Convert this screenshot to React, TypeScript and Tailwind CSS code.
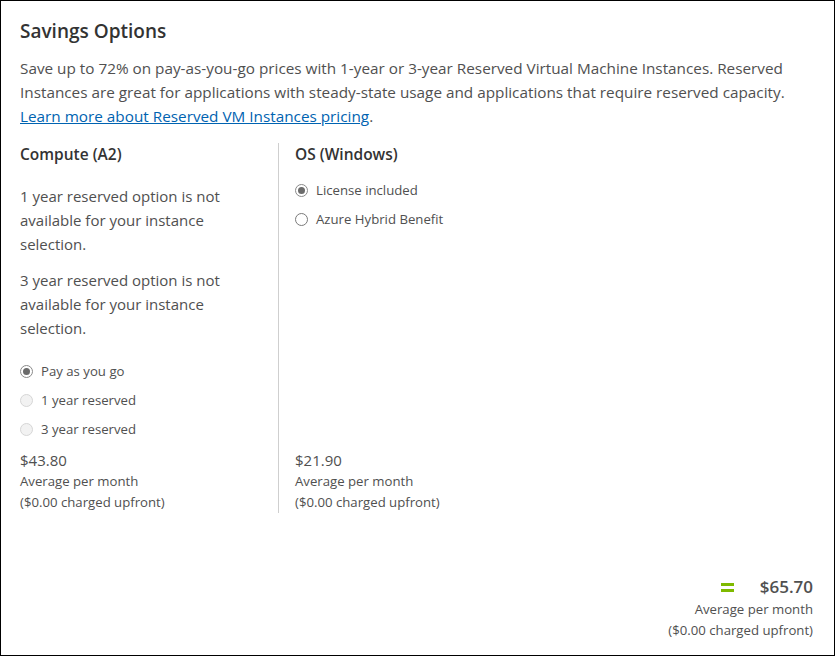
import React from "react";

const font = { fontFamily: '"Open Sans", "Noto Sans", sans-serif' };

function Radio({ state }: { state: "checked" | "unchecked" | "disabled" }) {
  if (state === "checked")
    return (
      <span className="flex h-[13px] w-[13px] items-center justify-center rounded-full border border-[#8a8a8a] bg-white">
        <span className="h-[7px] w-[7px] rounded-full bg-[#6b6b6b]" />
      </span>
    );
  if (state === "disabled")
    return <span className="h-[13px] w-[13px] rounded-full border border-[#d6d6d6] bg-[#f2f2f2]" />;
  return <span className="h-[13px] w-[13px] rounded-full border border-[#7a7a7a] bg-white" />;
}

function RadioRow({ state, label }: { state: "checked" | "unchecked" | "disabled"; label: string }) {
  return (
    <div className="flex h-[29px] items-center gap-2">
      <Radio state={state} />
      <span className="text-[13.2px] text-[#505050]">{label}</span>
    </div>
  );
}

export default function App() {
  return (
    <div style={font} className="box-border h-[656px] w-[835px] border border-black bg-white px-[19px] pt-[16px] text-[#505050]">
      <h1 className="text-[19px] font-semibold leading-[28px] text-[#333]">Savings Options</h1>
      <p className="mt-[11px] text-[15.3px] leading-[24px]">
        Save up to 72% on pay-as-you-go prices with 1-year or 3-year Reserved Virtual Machine Instances. Reserved
        <br />
        Instances are great for applications with steady-state usage and applications that require reserved capacity.
        <br />
        <a className="text-[#0063b1] underline" href="#">
          Learn more about Reserved VM Instances pricing
        </a>
        .
      </p>
      <div className="mt-[15px] flex">
        <div className="flex w-[259px] flex-col border-r border-[#cfcfcf]">
          <div className="text-[15.5px] font-semibold leading-[22px] text-[#333]">Compute (A2)</div>
          <p className="mt-[19px] text-[15px] leading-[24px]">
            1 year reserved option is not
            <br />
            available for your instance
            <br />
            selection.
          </p>
          <p className="mt-[12px] text-[15px] leading-[24px]">
            3 year reserved option is not
            <br />
            available for your instance
            <br />
            selection.
          </p>
          <div className="mt-[17px] flex flex-col">
            <RadioRow state="checked" label="Pay as you go" />
            <RadioRow state="disabled" label="1 year reserved" />
            <RadioRow state="disabled" label="3 year reserved" />
          </div>
          <div className="mt-[5px] text-[15px] leading-[22px]">$43.80</div>
          <div className="text-[13.2px] leading-[21px]">Average per month</div>
          <div className="text-[13.2px] leading-[21px]">($0.00 charged upfront)</div>
        </div>
        <div className="flex flex-1 flex-col pl-[16px]">
          <div className="text-[15.5px] font-semibold leading-[22px] text-[#333]">OS (Windows)</div>
          <div className="mt-[11px] flex flex-col">
            <RadioRow state="checked" label="License included" />
            <RadioRow state="unchecked" label="Azure Hybrid Benefit" />
          </div>
          <div className="mt-auto text-[15px] leading-[22px]">$21.90</div>
          <div className="text-[13.2px] leading-[21px]">Average per month</div>
          <div className="text-[13.2px] leading-[21px]">($0.00 charged upfront)</div>
        </div>
      </div>
      <div className="mt-[62px] flex flex-col items-end pr-[2px]">
        <div className="flex h-[24px] items-center">
          <span className="mr-[26px] flex flex-col gap-[3px]">
            <span className="h-[3px] w-[13px] bg-[#7fba00]" />
            <span className="h-[3px] w-[13px] bg-[#7fba00]" />
          </span>
          <span className="text-[17px] font-semibold text-[#505050]">$65.70</span>
        </div>
        <div className="text-[13.2px] leading-[21px]">Average per month</div>
        <div className="text-[13.2px] leading-[21px]">($0.00 charged upfront)</div>
      </div>
    </div>
  );
}
